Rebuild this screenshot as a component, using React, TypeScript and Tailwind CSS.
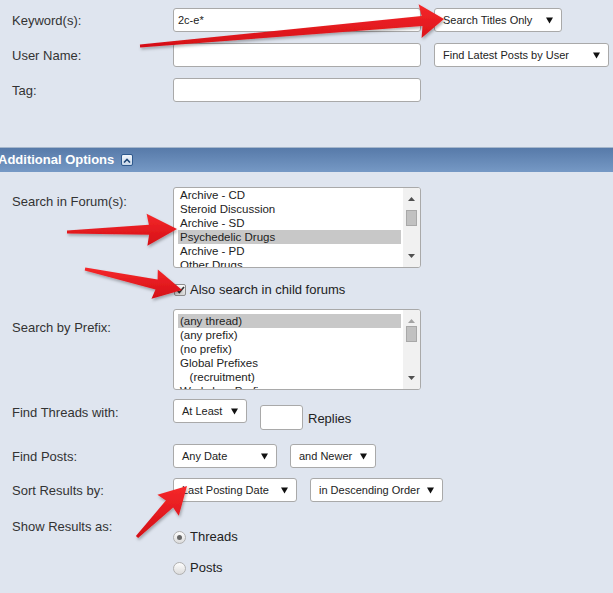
import React from 'react';

type Pt = [number, number];

// tapered skitch-style arrow, tail -> tip
function arrowPoints(t: Pt, p: Pt, w0: number, w1: number, L: number, H: number, back: number) {
  const dx = p[0] - t[0];
  const dy = p[1] - t[1];
  const len = Math.hypot(dx, dy);
  const ux = dx / len, uy = dy / len;
  const nx = -uy, ny = ux;
  const bx = p[0] - ux * L, by = p[1] - uy * L;
  const wx = bx - ux * back, wy = by - uy * back;
  const pts: Pt[] = [
    [t[0] + nx * w0, t[1] + ny * w0],
    [bx + nx * w1, by + ny * w1],
    [wx + nx * H, wy + ny * H],
    p,
    [wx - nx * H, wy - ny * H],
    [bx - nx * w1, by - ny * w1],
    [t[0] - nx * w0, t[1] - ny * w0],
  ];
  return pts.map((q) => `${q[0].toFixed(1)},${q[1].toFixed(1)}`).join(' ');
}

const arrows = [
  arrowPoints([140, 46], [444, 19], 1.5, 5, 22, 17, 2),
  arrowPoints([67, 232], [177, 229], 1.5, 5, 28, 16, 2),
  arrowPoints([85, 269], [182, 290], 1.5, 5, 26, 15, 2),
  arrowPoints([137, 537], [187, 486], 1.5, 5, 25, 15, 2),
];

function Caret() {
  return (
    <svg className="absolute right-[8px] top-[8px]" width="7" height="7" viewBox="0 0 7 7">
      <path d="M0 0.5h7L3.5 6.5z" fill="#111" />
    </svg>
  );
}

function Select({ label, className }: { label: string; className: string }) {
  return (
    <div className={`relative h-[24px] shrink-0 flex items-center pl-[8px] border border-[#a9a9a9] rounded-[3px] bg-white text-[11px] text-[#222] ${className}`}>
      {label}
      <Caret />
    </div>
  );
}

function TextBox({ value = '', className = 'w-[248px] h-[24px]' }: { value?: string; className?: string }) {
  return (
    <div className={`shrink-0 flex items-center pl-[4px] border border-[#a9a9a9] rounded-[3px] bg-white text-[11px] text-[#222] ${className}`}>
      {value}
    </div>
  );
}

function Label({ children, className = 'h-[24px] items-center' }: { children: React.ReactNode; className?: string }) {
  return <div className={`w-[173px] shrink-0 pl-[12px] flex text-[13px] text-[#333] ${className}`}>{children}</div>;
}

function Scrollbar({ thumbTop, upDark }: { thumbTop: string; upDark: boolean }) {
  return (
    <div className="relative w-[17px] shrink-0 bg-[#f1f1f1]">
      <svg className="absolute left-[5px] top-[9px]" width="7" height="4" viewBox="0 0 7 4">
        <path d="M3.5 0L7 4H0z" fill={upDark ? '#505050' : '#a3a3a3'} />
      </svg>
      <div className={`absolute left-[3px] w-[11px] h-[16px] bg-[#c1c1c1] border border-[#a8a8a8] ${thumbTop}`} />
      <svg className="absolute left-[5px] bottom-[9px]" width="7" height="4" viewBox="0 0 7 4">
        <path d="M0 0h7L3.5 4z" fill="#505050" />
      </svg>
    </div>
  );
}

function ListBox({ items, selected, thumbTop, upDark, padTop }: { items: string[]; selected: number; thumbTop: string; upDark: boolean; padTop: string }) {
  return (
    <div className="w-[248px] h-[81px] shrink-0 flex border border-[#a9a9a9] rounded-[3px] bg-white overflow-hidden">
      <div className={`flex-1 ml-[4px] mr-[2px] ${padTop}`}>
        {items.map((it, i) => (
          <div
            key={i}
            className={`h-[14px] leading-[14px] pl-[2px] text-[11.5px] text-[#222] whitespace-pre ${i === selected ? 'bg-[#c8c8c8]' : ''}`}
          >
            {it}
          </div>
        ))}
      </div>
      <Scrollbar thumbTop={thumbTop} upDark={upDark} />
    </div>
  );
}

function Radio({ checked }: { checked: boolean }) {
  return (
    <span className="w-[13px] h-[13px] rounded-full border border-[#b0b0b0] bg-gradient-to-b from-[#fdfdfd] to-[#dcdcdc] flex items-center justify-center">
      {checked && <span className="w-[5px] h-[5px] rounded-full bg-[#666]" />}
    </span>
  );
}

export default function App() {
  return (
    <div className="relative w-full h-[593px] overflow-hidden bg-[#dfe5ef] font-['Liberation_Sans',Arial,sans-serif]">
      {/* basic search */}
      <div className="pt-[8px] pb-[45px] flex flex-col gap-[11px]">
        <div className="flex">
          <Label className="h-[24px] items-center pt-[2px]">Keyword(s):</Label>
          <TextBox value="2c-e*" />
          <Select label="Search Titles Only" className="ml-[13px] w-[128px]" />
        </div>
        <div className="flex">
          <Label className="h-[24px] items-center pt-[2px]">User Name:</Label>
          <TextBox />
          <Select label="Find Latest Posts by User" className="ml-[13px] w-[175px]" />
        </div>
        <div className="flex">
          <Label className="h-[24px] items-center pt-[2px]">Tag:</Label>
          <TextBox />
        </div>
      </div>

      {/* section bar */}
      <div className="border-t border-[#a6b7cc] h-[25px] bg-gradient-to-b from-[#577aa9] to-[#7699c5] flex items-center">
        <span className="ml-[-2px] text-white font-bold text-[13px]">Additional Options</span>
        <span className="ml-[7px] w-[12px] h-[12px] border border-[#2f5a8e] rounded-[2px] bg-gradient-to-b from-[#f2f6fb] to-[#c9d8ea] flex items-center justify-center">
          <svg width="8" height="5" viewBox="0 0 8 5">
            <path d="M1 4.5L4 1.5l3 3" stroke="#1e4677" strokeWidth="1.6" fill="none" />
          </svg>
        </span>
      </div>

      {/* additional options */}
      <div className="pt-[15px]">
        <div className="flex">
          <Label className="pt-[5px]">Search in Forum(s):</Label>
          <ListBox
            items={['Archive - CD', 'Steroid Discussion', 'Archive - SD', 'Psychedelic Drugs', 'Archive - PD', 'Other Drugs']}
            selected={3}
            thumbTop="top-[22px]"
            upDark
            padTop="pt-0"
          />
        </div>

        <div className="flex mt-[15px]">
          <div className="w-[173px] shrink-0" />
          <div className="h-[14px] flex items-center text-[13px] text-[#222]">
            <span className="w-[12px] h-[12px] ml-[1px] rounded-[2px] border border-[#8c8c8c] bg-gradient-to-b from-[#fafafa] to-[#d8d8d8] flex items-center justify-center">
              <svg width="9" height="8" viewBox="0 0 9 8">
                <path d="M1 4l2.3 2.5L8 1" stroke="#333" strokeWidth="1.7" fill="none" />
              </svg>
            </span>
            <span className="ml-[4px]">Also search in child forums</span>
          </div>
        </div>

        <div className="flex mt-[12px]">
          <Label className="pt-[9px]">Search by Prefix:</Label>
          <ListBox
            items={['(any thread)', '(any prefix)', '(no prefix)', 'Global Prefixes', '   (recruitment)', 'Workshop Prefixes']}
            selected={0}
            thumbTop="top-[16px]"
            upDark={false}
            padTop="pt-[4px]"
          />
        </div>

        <div className="flex mt-[9px]">
          <Label className="h-[24px] items-center pt-[3px]">Find Threads with:</Label>
          <Select label="At Least" className="w-[74px]" />
          <TextBox className="ml-[13px] mt-[6px] w-[43px] h-[25px]" />
          <span className="ml-[5px] mt-[10px] text-[13px] text-[#222]">Replies</span>
        </div>

        <div className="flex mt-[14px]">
          <Label className="h-[24px] items-center pt-[2px]">Find Posts:</Label>
          <Select label="Any Date" className="w-[104px]" />
          <Select label="and Newer" className="ml-[13px] w-[86px]" />
        </div>

        <div className="flex mt-[10px]">
          <Label className="h-[24px] items-center pt-[2px]">Sort Results by:</Label>
          <Select label="Last Posting Date" className="w-[124px]" />
          <Select label="in Descending Order" className="ml-[13px] w-[133px]" />
        </div>

        <div className="flex mt-[15px]">
          <Label className="h-[20px] items-center">Show Results as:</Label>
          <div className="pt-[12px] flex flex-col text-[13px] text-[#222]">
            <div className="h-[16px] flex items-center">
              <Radio checked />
              <span className="ml-[4px]">Threads</span>
            </div>
            <div className="h-[16px] mt-[15px] flex items-center">
              <Radio checked={false} />
              <span className="ml-[4px]">Posts</span>
            </div>
          </div>
        </div>
      </div>

      {/* annotation arrows */}
      <svg className="absolute inset-0 pointer-events-none" width="613" height="593" viewBox="0 0 613 593">
        <defs>
          <filter id="sh" x="-10%" y="-30%" width="130%" height="180%">
            <feDropShadow dx="1" dy="2" stdDeviation="1.5" floodColor="#000" floodOpacity="0.3" />
          </filter>
          <linearGradient id="rd" x1="0" y1="0" x2="0" y2="1">
            <stop offset="0" stopColor="#f5282a" />
            <stop offset="1" stopColor="#d40f16" />
          </linearGradient>
        </defs>
        {arrows.map((pts, i) => (
          <polygon key={i} points={pts} fill="url(#rd)" filter="url(#sh)" strokeLinejoin="round" />
        ))}
      </svg>
    </div>
  );
}
